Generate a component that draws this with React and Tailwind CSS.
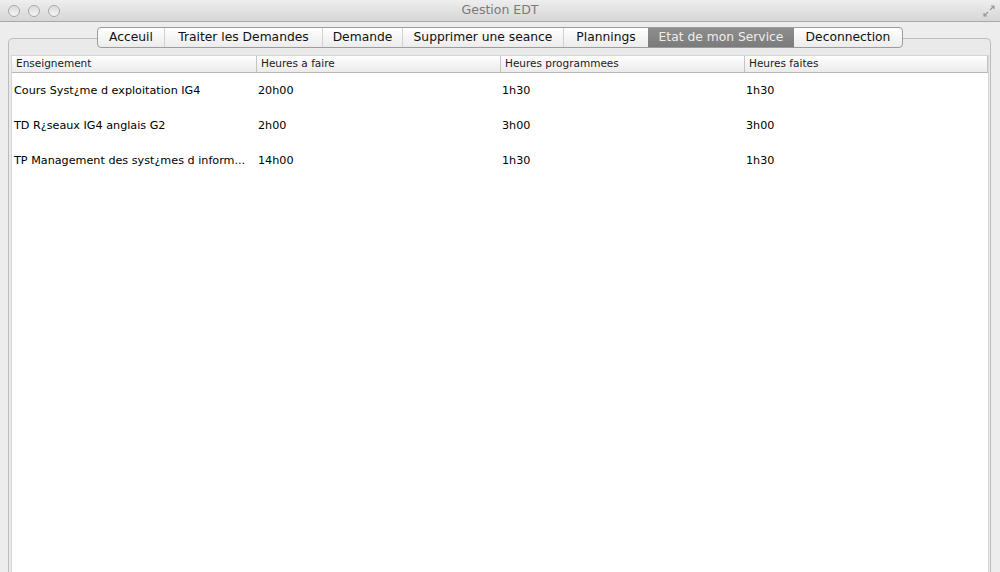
import React, { useState } from 'react';

const TABS = [
  { label: 'Acceuil', w: 'w-[66px]' },
  { label: 'Traiter les Demandes', w: 'w-[158px]' },
  { label: 'Demande', w: 'w-[80px]' },
  { label: 'Supprimer une seance', w: 'w-[161px]' },
  { label: 'Plannings', w: 'w-[85px]' },
  { label: 'Etat de mon Service', w: 'w-[146px]' },
  { label: 'Deconnection', w: 'w-[108px]' },
];

const COLUMNS = ['Enseignement', 'Heures a faire', 'Heures programmees', 'Heures faites'];

const ROWS = [
  ['Cours Syst¿me d exploitation IG4', '20h00', '1h30', '1h30'],
  ['TD R¿seaux IG4 anglais G2', '2h00', '3h00', '3h00'],
  ['TP Management des syst¿mes d inform...', '14h00', '1h30', '1h30'],
];

const TrafficLight = () => (
  <span className="w-[12px] h-[12px] rounded-full border border-[#a8a8a8] bg-gradient-to-b from-[#dcdcdc] to-[#f4f4f4]" />
);

const ResizeIcon = () => (
  <svg width="12" height="12" viewBox="0 0 12 12" fill="none" stroke="#9a9a9a" strokeWidth="1.2">
    <path d="M7 5 L11 1 M8 1 H11 V4" />
    <path d="M5 7 L1 11 M1 8 V11 H4" />
  </svg>
);

export default function App() {
  const [active, setActive] = useState(5);

  return (
    <div className="h-screen w-full overflow-hidden flex flex-col bg-[#ededed] font-['Lucida_Grande','DejaVu_Sans',sans-serif]">
      {/* barre de titre */}
      <div className="relative h-[22px] shrink-0 flex items-center justify-center border-b border-[#a9a9a9] bg-gradient-to-b from-[#eeeeee] to-[#d6d6d6]">
        <div className="absolute left-[8px] top-[5px] flex gap-[8px]">
          <TrafficLight />
          <TrafficLight />
          <TrafficLight />
        </div>
        <span className="text-[12.5px] text-[#7a7a7a]">Gestion EDT</span>
        <div className="absolute right-[5px] top-[5px]">
          <ResizeIcon />
        </div>
      </div>

      <div className="flex-1 flex flex-col pt-[5px]">
        {/* onglets */}
        <div className="relative z-10 flex justify-center">
          <div className="flex h-[21px] rounded-[4px] border border-[#9c9c9c] bg-gradient-to-b from-[#ffffff] to-[#ececec] overflow-hidden">
            {TABS.map((tab, i) => {
              const selected = i === active;
              const prevSelected = i - 1 === active;
              return (
                <button
                  key={tab.label}
                  onClick={() => setActive(i)}
                  className={`${tab.w} h-full flex items-center justify-center text-[12.3px] leading-none ${
                    selected
                      ? 'bg-gradient-to-b from-[#8e8e8e] to-[#7b7b7b] text-[#ededed]'
                      : 'text-[#111]'
                  } ${i > 0 && !selected && !prevSelected ? 'border-l border-[#d2d2d2]' : ''}`}
                >
                  {tab.label}
                </button>
              );
            })}
          </div>
        </div>

        {/* panneau */}
        <div className="-mt-[10px] ml-[8px] mr-[9px] flex-1 flex flex-col rounded-t-[5px] border border-b-0 border-[#bcbcbc] bg-[#eaeaea] pt-[16px] pl-[2px] pr-[1px]">
          <div className="flex-1 flex flex-col bg-white border-l border-r border-[#d6d6d6]">
            <div className="flex h-[18px] border-t border-b border-t-[#d4d4d4] border-b-[#b9b9b9] bg-gradient-to-b from-[#ffffff] to-[#ebebeb]">
              {COLUMNS.map((col, i) => (
                <div
                  key={col}
                  className={`w-[244px] flex items-center pl-[4px] text-[10.5px] text-[#1a1a1a] ${
                    i > 0 ? 'border-l border-[#c4c4c4]' : ''
                  } ${i === 3 ? 'border-r' : ''}`}
                >
                  {col}
                </div>
              ))}
            </div>
            <div className="pt-[1px]">
              {ROWS.map((row) => (
                <div key={row[0]} className="flex h-[35px]">
                  {row.map((cell, j) => (
                    <div key={j} className="w-[244px] flex items-center pl-[2px] text-[11.2px] text-black whitespace-nowrap overflow-hidden">
                      {cell}
                    </div>
                  ))}
                </div>
              ))}
            </div>
          </div>
        </div>
      </div>
    </div>
  );
}
